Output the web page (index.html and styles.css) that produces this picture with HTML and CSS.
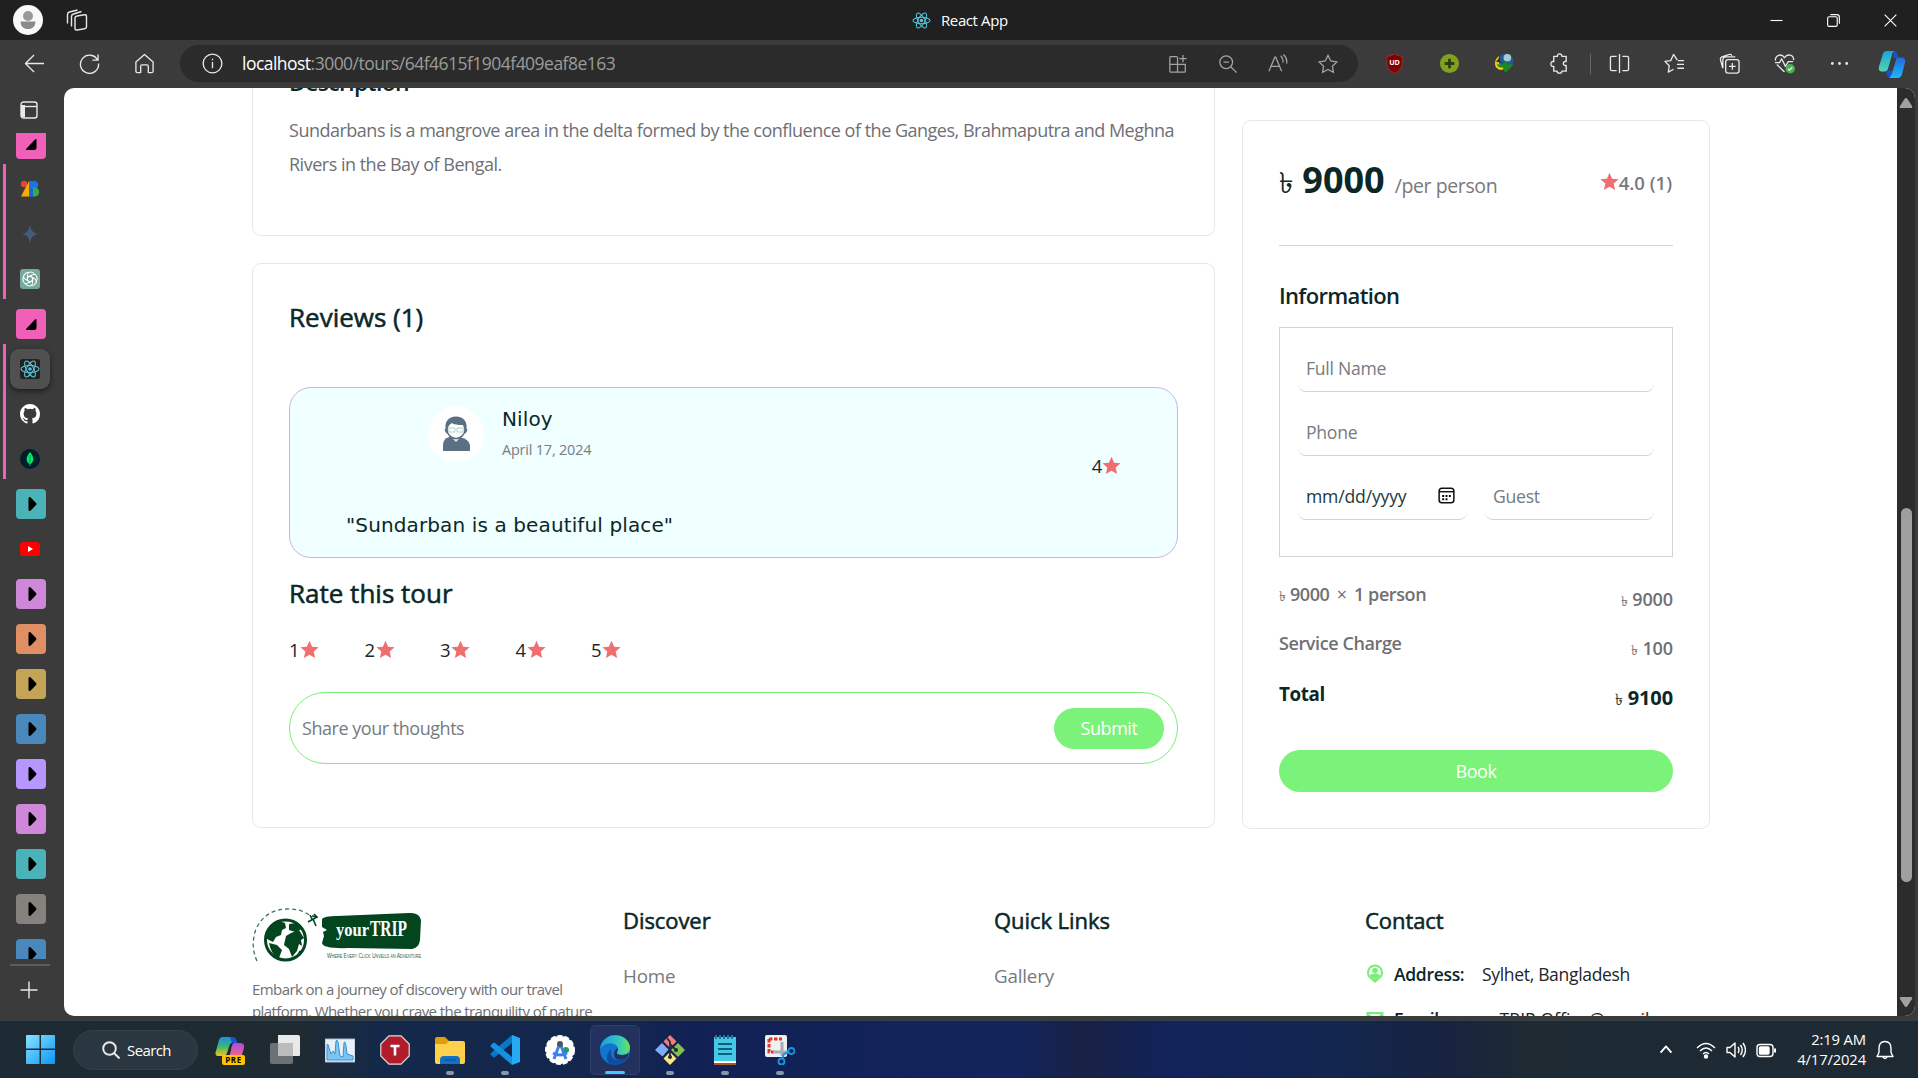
FILE: index.html
```html
<!DOCTYPE html>
<html lang="en">
<head>
<meta charset="utf-8">
<title>React App</title>
<link rel="stylesheet" href="styles.css">
</head>
<body>
<svg class="defs" width="0" height="0">
  <symbol id="star" viewBox="0 0 24 24"><path d="M12 .8l3.300 7.600 8.200.8-6.200 5.400 1.800 8.200L12 18.500 4.900 22.800l1.800-8.200L.5 9.200l8.200-.8z" fill="#ef6f71"/></symbol>
  <symbol id="react" viewBox="0 0 24 24"><g fill="none" stroke="#58c4dc" stroke-width="1.300"><ellipse cx="12" cy="12" rx="10.800" ry="4.200"/><ellipse cx="12" cy="12" rx="10.800" ry="4.200" transform="rotate(60 12 12)"/><ellipse cx="12" cy="12" rx="10.800" ry="4.200" transform="rotate(120 12 12)"/></g><circle cx="12" cy="12" r="2.200" fill="#58c4dc"/></symbol>
  <symbol id="arrow" viewBox="0 0 30 30"><path d="M12.500 9.500q0-1.500 1-1.500t1.500.7l5 5.300q1 1 0 2l-5 5.300q-.5.700-1.500.7t-1-1.500z"/></symbol>
  <symbol id="corner" viewBox="0 0 30 30"><path d="M20.500 11v7.500q0 2.500-2.500 2.500h-7q-2 0-.5-1.500l8-8.500q2-2 2 0z"/></symbol>
</svg>

<header class="titlebar">
  <svg class="profile" viewBox="0 0 30 30"><circle cx="15" cy="15" r="15" fill="#f9f9f9"/><circle cx="15" cy="11" r="5" fill="#999"/><path d="M8 16.500h14q.5 0 .3 1.500c-.6 4-3.500 6-7.300 6s-6.700-2-7.300-6q-.2-1.500.3-1.500z" fill="#8b8b8b"/></svg>
  <svg class="spaces line" viewBox="0 0 22 22"><rect x="9" y="6" width="11.500" height="14" rx="2" transform="skewY(-10) translate(0 3)"/><path d="M5.500 17.500V7.500q0-2 2-2.500l8-2.500M1.500 14.500V5.500q0-2 2-2.500l8-2"/></svg>
  <div class="window-title"><svg viewBox="0 0 24 24"><use href="#react"/></svg><span>React App</span></div>
  <div class="window-buttons">
    <svg viewBox="0 0 14 14"><path d="M.5 7h13"/></svg>
    <svg viewBox="0 0 14 14"><rect x=".7" y="3" width="10.300" height="10.300" rx="1.500"/><path d="M3.500 .7h7q2.800 0 2.800 2.800v7"/></svg>
    <svg viewBox="0 0 14 14"><path d="M.7.7l12.600 12.600M13.300.7L.7 13.300"/></svg>
  </div>
</header>

<nav class="toolbar">
  <div class="nav-buttons line">
    <svg viewBox="0 0 22 22"><path d="M21 11H1.500M10.500 2L1.500 11l9 9"/></svg>
    <svg viewBox="0 0 22 22"><path d="M19.500 7.500A9.500 9.500 0 1 0 20.500 11M20 1.500v6h-6"/></svg>
    <svg viewBox="0 0 22 22"><path d="M2 9.500L11 1.500l9 8v9.500q0 1.500-1.500 1.500h-3.500V14q0-1.500-1.500-1.500h-5Q7 12.500 7 14v6.500H3.500Q2 20.500 2 19z"/></svg>
  </div>
  <div class="address">
    <svg class="line info" viewBox="0 0 22 22"><circle cx="11" cy="11" r="9.800"/><path d="M11 9.500v6.500M11 6v1.500"/></svg>
    <span class="url"><b>localhost</b>:3000/tours/64f4615f1904f409eaf8e163</span>
    <div class="address-tools">
      <svg viewBox="0 0 22 22"><path d="M10 3H3q-1 0-1 1v15q0 1 1 1h15q1 0 1-1v-7.500H2M10.500 3v17M16.500 1v8M12.500 5h8"/></svg>
      <svg viewBox="0 0 22 22"><circle cx="9" cy="9" r="7"/><path d="M14 14l6.500 6.500M6 9h6"/></svg>
      <svg viewBox="0 0 22 22"><path d="M1 19L7.500 3.500h1L15 19M3.500 13.500h9M14 2q3 3 2.500 7.500M17 .5q4.500 4 3.500 10"/></svg>
      <svg viewBox="0 0 22 22"><path d="M11 1.500l3 6.200 6.800 1-5 4.700 1.200 6.800-6-3.200-6 3.200 1.200-6.800-5-4.700 6.800-1z"/></svg>
    </div>
  </div>
  <div class="extensions line">
    <svg viewBox="0 0 22 22"><path d="M11 1q4 2.500 8 2.500v7c0 5-3.500 8.500-8 11C6.500 19 3 15.500 3 10.500v-7q4 0 8-2.500z" fill="#800000" stroke="#a33" stroke-width=".8"/><text x="11" y="13" text-anchor="middle" class="ub">UD</text></svg>
    <svg viewBox="0 0 22 22"><circle cx="11" cy="11" r="10" fill="#7ea31d" stroke="none"/><path d="M11 6v10M6 11h10" stroke="#343b12" stroke-width="3"/></svg>
    <svg viewBox="0 0 22 22"><g stroke="none"><circle cx="12.500" cy="8.500" r="8" fill="#245a8f"/><circle cx="14" cy="5" r="4" fill="#a9c8da"/><path d="M5 3Q-1 9 2 15q4 5 10 1l-3-2q-5 0-4-11z" fill="#ecc915"/><path d="M3 11q5 3 8-1l3-2v4h6.500L12 21 9 15q-5 1-6-4z" fill="#1a8a18"/><path d="M2 9l4-4q0 5 4 6z" fill="#1c334f"/></g></svg>
    <svg viewBox="0 0 22 22"><path d="M5 3.500h4q-.5-2.500 2-2.500t2.500 2.500H18V9q-3-.5-3 2t3 2v6h-4.500q0 2-2.500 2t-2.500-2H5v-5q-3 .5-3-2.500T5 9z"/></svg>
  </div>
  <i class="divider"></i>
  <div class="browser-tools line">
    <svg viewBox="0 0 22 22"><path d="M8 3.500H3q-1.500 0-1.500 1.500v12q0 1.500 1.500 1.500h5M14 3.500h5q1.500 0 1.500 1.500v12q0 1.500-1.500 1.500h-5M11 1v20"/></svg>
    <svg viewBox="0 0 22 22"><path d="M14 7.500L10 1.500 7 8l-6 .8 4.500 4.500L4.500 20l5.500-3M14.500 8H21M13.500 12H21M14 16h7"/></svg>
    <svg viewBox="0 0 22 22"><rect x="7" y="7" width="14" height="14" rx="2.500"/><path d="M14 10.500v7M10.500 14h7M4 16L1.500 7Q1 5 3 4l8-2.500q2-.5 2.500 1.500M4 16V7.500q0-3.500 3.500-3.500H17"/></svg>
    <svg viewBox="0 0 22 22"><path d="M11 20L3 12M1.500 8C1 2 8 0 11 5c3-5 10-3 9.500 2.500M1 10h5l2-4 4 8 3-5h5"/><circle cx="17" cy="16.500" r="5" fill="#4caf50" stroke="none"/><path d="M14.800 16.500l1.500 1.500 3-3"/></svg>
    <svg viewBox="0 0 22 22"><path d="M3.500 11h.01M11 11h.01M18.500 11h.01" stroke-width="3" stroke-linecap="round"/></svg>
    <svg class="copilot" viewBox="0 0 30 30"><defs><linearGradient id="ca" x2="0" y2="1"><stop stop-color="#1aa5dc"/><stop offset="1" stop-color="#55d2b0"/></linearGradient><linearGradient id="cb" x2="0" y2="1"><stop stop-color="#2168dd"/><stop offset="1" stop-color="#22b8f8"/></linearGradient></defs><g stroke="none"><path d="M17 1q3 0 4 4l1 3h-3q-2 0-3 2zM13 22H8l1 4q1 3 4 4 2 0 2-8z" fill="#1552d4"/><path d="M9 1h9q-2 0-3 4l-4 14q-1 4-4 4H4q-4 0-3-5L5 5q1-4 4-4z" fill="url(#ca)"/><path d="M20 8h6q4 1 3 5l-3 12q-1 5-5 5h-9q2-1 3-5z" fill="url(#cb)"/></g></svg>
  </div>
</nav>

<div class="workspace">
  <aside class="tabs">
    <svg class="pane line" viewBox="0 0 18 18"><rect x="1" y="1" width="16" height="16" rx="2.500"/><path d="M1 5.500h16"/><path d="M3 4v12" stroke-width="4"/></svg>
    <div class="tab-list">
      <div class="tab"><svg class="chip pink"><use href="#corner"/></svg></div>
      <div class="tab-group">
        <div class="tab"><svg class="fav" viewBox="0 0 20 20"><circle cx="4" cy="5" r="3.200" fill="#ea4335"/><path d="M1 17.500L9 2v15.500z" fill="#f9ab00"/><path d="M9 2h3v15.500H9z" fill="#1a73e8"/><circle cx="14" cy="6" r="4.200" fill="#1a73e8"/><circle cx="14.500" cy="13" r="4.700" fill="#34a853"/><path d="M10 9h3v8.500h-3z" fill="#1967d2"/></svg></div>
        <div class="tab"><svg class="fav" viewBox="0 0 20 20"><path d="M10 1q1 8 8 9-7 1-8 9-1-8-8-9 7-1 8-9z" fill="#445b7c"/></svg></div>
        <div class="tab"><svg class="fav" viewBox="0 0 20 20"><rect width="20" height="20" rx="3" fill="#75a99c"/><g fill="none" stroke="#fff" stroke-width="1"><path id="petal" d="M7.500 8.500V5.500Q8 2.500 11 3q3 0 4 3M7.500 8.500L10 7l4 2.300"/><use href="#petal" transform="rotate(60 10 10)"/><use href="#petal" transform="rotate(120 10 10)"/><use href="#petal" transform="rotate(180 10 10)"/><use href="#petal" transform="rotate(240 10 10)"/><use href="#petal" transform="rotate(300 10 10)"/></g></svg></div>
      </div>
      <div class="tab"><svg class="chip pink"><use href="#corner"/></svg></div>
      <div class="tab-group">
        <div class="tab"><span class="active"><svg class="fav dark" viewBox="0 0 24 24"><use href="#react"/></svg></span></div>
        <div class="tab"><svg class="fav" viewBox="0 0 16 16"><path fill="#fff" d="M8 0C3.580 0 0 3.580 0 8c0 3.540 2.290 6.530 5.470 7.590.4.070.55-.17.55-.38 0-.19-.01-.82-.01-1.490-2.010.37-2.530-.49-2.690-.94-.09-.23-.48-.94-.82-1.130-.28-.15-.68-.52-.01-.53.63-.01 1.080.58 1.230.82.72 1.210 1.870.87 2.330.66.07-.52.28-.87.51-1.070-1.780-.2-3.640-.89-3.640-3.950 0-.87.31-1.590.82-2.150-.08-.2-.36-1.020.08-2.120 0 0 .67-.21 2.200.82a7.600 7.600 0 0 1 4 0c1.530-1.040 2.200-.82 2.200-.82.44 1.100.16 1.920.08 2.120.51.56.82 1.270.82 2.150 0 3.070-1.870 3.750-3.650 3.950.29.25.54.73.54 1.480 0 1.070-.01 1.930-.01 2.200 0 .21.15.46.55.38A8 8 0 0 0 16 8c0-4.420-3.580-8-8-8z"/></svg></div>
        <div class="tab"><svg class="fav" viewBox="0 0 20 20"><circle cx="10" cy="10" r="10" fill="#001e2b"/><path d="M10 3c5 6 4 10 0 12.500C6 13 5 9 10 3z" fill="#00ed64"/><path d="M10 6v11" stroke="#00a84a"/></svg></div>
      </div>
      <div class="tab"><svg class="chip teal"><use href="#arrow"/></svg></div>
      <div class="tab"><svg class="fav" viewBox="0 0 20 20"><rect y="3" width="20" height="14" rx="3.500" fill="#f00"/><path d="M8 7l5 3-5 3z" fill="#fff"/></svg></div>
      <div class="tab"><svg class="chip purple"><use href="#arrow"/></svg></div>
      <div class="tab"><svg class="chip orange"><use href="#arrow"/></svg></div>
      <div class="tab"><svg class="chip gold"><use href="#arrow"/></svg></div>
      <div class="tab"><svg class="chip blue"><use href="#arrow"/></svg></div>
      <div class="tab"><svg class="chip violet"><use href="#arrow"/></svg></div>
      <div class="tab"><svg class="chip purple"><use href="#arrow"/></svg></div>
      <div class="tab"><svg class="chip teal"><use href="#arrow"/></svg></div>
      <div class="tab"><svg class="chip gray"><use href="#arrow"/></svg></div>
      <div class="tab"><svg class="chip blue"><use href="#arrow"/></svg></div>
    </div>
    <i class="rule"></i>
    <svg class="new-tab line" viewBox="0 0 18 18"><path d="M9 .5v17M.5 9h17"/></svg>
  </aside>

  <div class="viewport">
    <main class="page">
      <div class="columns">
        <div class="main-column">
          <section class="card description">
            <h2>Description</h2>
            <p>Sundarbans is a mangrove area in the delta formed by the confluence of the Ganges, Brahmaputra and Meghna<br>Rivers in the Bay of Bengal.</p>
          </section>
          <section class="card reviews">
            <h3>Reviews (1)</h3>
            <article class="review">
              <div class="review-head">
                <svg class="avatar" viewBox="0 0 56 56"><circle cx="28" cy="28" r="28" fill="#fff"/><path d="M15 45V39q0-6 6-8l5-1 5 1q10 2 11 8v6z" fill="#5b7083"/><path d="M23 31l5 5 5-5v-4H23z" fill="#d4f0ec"/><path d="M19 22q-3 0-2 3t3 3M37 22q3 0 2 3t-3 3" fill="#5b7083"/><circle cx="28" cy="23.500" r="9" fill="#fff" stroke="#5b7083" stroke-width="1.500"/><path d="M17.500 23q-1-12 10.500-12.500Q39.500 11 38.500 23q-2-2-2.500-4-10 0-12-2-4 2-6.500 6z" fill="#5b7083"/><path d="M21 22h6v4h-6zM29 22h6v4h-6z" fill="none" stroke="#a9d8d0"/></svg>
                <div class="who"><h5>Niloy</h5><p>April 17, 2024</p></div>
                <span class="score">4<svg><use href="#star"/></svg></span>
              </div>
              <h6>"Sundarban is a beautiful place"</h6>
            </article>
            <h3 class="rate">Rate this tour</h3>
            <div class="stars"><span>1<svg><use href="#star"/></svg></span><span>2<svg><use href="#star"/></svg></span><span>3<svg><use href="#star"/></svg></span><span>4<svg><use href="#star"/></svg></span><span>5<svg><use href="#star"/></svg></span></div>
            <div class="thoughts"><span>Share your thoughts</span><button>Submit</button></div>
          </section>
        </div>
        <aside class="card booking">
          <div class="price"><span class="amount"><i class="taka">৳</i> 9000</span><span class="per">/per person</span><span class="rating"><svg><use href="#star"/></svg>4.0 (1)</span></div>
          <h4>Information</h4>
          <form class="form">
            <div class="field">Full Name</div>
            <div class="field">Phone</div>
            <div class="pair">
              <div class="field date">mm/dd/yyyy<svg viewBox="0 0 18 18"><rect x="1.200" y="1.200" width="15.600" height="15.600" rx="3" fill="none" stroke="#111" stroke-width="1.600"/><path d="M1 5h16" stroke="#111" stroke-width="1.500"/><path d="M4.500 8.500h2v2h-2zM8 8.500h2v2H8zM11.500 8.500h2v2h-2zM4.500 12h2v2h-2zM8 12h2v2H8z"/></svg></div>
              <div class="field">Guest</div>
            </div>
          </form>
          <dl class="totals">
            <div><dt><i class="taka">৳</i> 9000 <span class="times">×</span> 1 person</dt><dd><i class="taka">৳</i> 9000</dd></div>
            <div><dt>Service Charge</dt><dd><i class="taka">৳</i> 100</dd></div>
            <div class="sum"><dt>Total</dt><dd><i class="taka">৳</i> 9100</dd></div>
          </dl>
          <button class="book">Book</button>
        </aside>
      </div>
      <footer class="footer">
        <div>
          <svg class="logo" viewBox="0 0 170 54"><path d="M5 53Q-2 38 4 21 13 2 34 1q15-1 26 8" fill="none" stroke="#3d7359" stroke-dasharray="4 3" stroke-width="1.300"/><circle cx="33.500" cy="32" r="20" fill="#fff" stroke="#03451f" stroke-width="3"/><path d="M15 24q4-9 12-11l6 2 1 5-4 2-1 5-5 2-3 5-6-3zM17 35l8 2 5 5-3 8q-8-3-10-15zM34 28l5-3 8-3 5 8-3 2 1 6-3-2-2 7-5 6-3-8-5-4zM37 16l7-1 6 6-7 3-6-2zM47 43l4-1q-3 6-7 8z" fill="#03451f"/><path d="M56 14l9-5-3-3M60 11l-2-4M61 11l3 7M65 9l-5-1" fill="none" stroke="#03451f" stroke-width="1.600"/><path d="M70 11q2-3 15-3l72-3q10-1 12 7l-1 20q-1 8-8 9l-63-1q-26 1-27-5l2-7-1-4 4-2-5-3z" fill="#03451f"/><text x="84" y="28" class="brand-your" textLength="33" lengthAdjust="spacingAndGlyphs">your</text><text x="118" y="28" class="brand-trip" textLength="37" lengthAdjust="spacingAndGlyphs">TRIP</text><text x="75" y="50" class="tagline" textLength="94" lengthAdjust="spacingAndGlyphs">Where Every Click Unveils an Adventure</text></svg>
          <p class="blurb">Embark on a journey of discovery with our travel<br>platform. Whether you crave the tranquility of nature</p>
        </div>
        <div><h5>Discover</h5><a>Home</a></div>
        <div><h5>Quick Links</h5><a>Gallery</a></div>
        <div>
          <h5>Contact</h5>
          <div class="contact"><svg viewBox="0 0 18 20"><path d="M9 .5a8 8 0 0 1 8 8q0 4-3.500 6.500L9 19l-4.500-4Q1 12.500 1 8.500a8 8 0 0 1 8-8z" fill="#79ee77"/><circle cx="9" cy="8.500" r="6" fill="#fff"/><circle cx="9" cy="6.500" r="2.700" fill="#79ee77"/><path d="M4 12q0-2.500 5-2.500t5 2.500q-5 5-10 0z" fill="#79ee77"/></svg><b>Address:</b><span>Sylhet, Bangladesh</span></div>
          <div class="contact mail"><svg viewBox="0 0 18 20"><path d="M1.500 4h15v13h-15zM1.500 5L9 11l7.500-6" fill="none" stroke="#79ee77" stroke-width="2"/></svg><b>Email:</b><span>yourTRIP.Office@gmail.com</span></div>
        </div>
      </footer>
    </main>
    <div class="scrollbar"><svg viewBox="0 0 14 12"><path d="M7 1q1 0 1.500 1L13 9q1 2-1 2H2Q0 11 1 9l4.500-7Q6 1 7 1z"/></svg><i></i><svg class="down" viewBox="0 0 14 12"><path d="M7 1q1 0 1.500 1L13 9q1 2-1 2H2Q0 11 1 9l4.500-7Q6 1 7 1z"/></svg></div>
  </div>
</div>

<div class="taskbar">
  <svg class="start" viewBox="0 0 30 30"><defs><linearGradient id="w" x2="1" y2="1"><stop stop-color="#8be2ff"/><stop offset="1" stop-color="#0a97f5"/></linearGradient></defs><path d="M0 1q0-1 1-1h13v14H0zM15.500 0H29q1 0 1 1v13H15.500zM0 15.500h14V30H1q-1 0-1-1zM15.500 15.500H30V29q0 1-1 1H15.500z" fill="url(#w)"/></svg>
  <div class="search"><svg class="line" viewBox="0 0 18 18"><circle cx="7.500" cy="7.500" r="6.300"/><path d="M12 12l5.500 5.500"/></svg>Search</div>
  <div class="apps">
    <div><svg viewBox="0 0 30 30"><defs><linearGradient id="k1" x2="0" y2="1"><stop stop-color="#1b8eea"/><stop offset=".5" stop-color="#3db66f"/><stop offset="1" stop-color="#f0c51c"/></linearGradient><linearGradient id="k2" x2="0" y2="1"><stop stop-color="#a94be0"/><stop offset="1" stop-color="#ff6a75"/></linearGradient></defs><path d="M7 2h10q4 0 5 6h-5q-2 0-3 4l-2 6q-1 3-4 3H4q-5 0-3-5L4 5q1-3 3-3z" fill="url(#k1)"/><path d="M15 2h3q3 0 4 6h-5z" fill="#1f4fd0"/><path d="M19 8h6q5 0 4 5l-3 10H13q2-2 3-8 1-7 3-7z" fill="url(#k2)"/><rect x="7" y="20" width="23" height="10" rx="2" fill="#ffc400"/><text x="18.500" y="28" text-anchor="middle" class="pre">PRE</text></svg></div>
    <div><svg viewBox="0 0 30 30"><path d="M8 0h20q2 0 2 2v18q0 1-1 1H8z" fill="#e9e9e9"/><path d="M0 10q0-2 2-2h21v19q0 2-2 2H2q-2 0-2-2z" fill="#6d7173"/><path d="M8 8h15v13H8z" fill="#bcbcbc"/></svg></div>
    <div><svg viewBox="0 0 30 30"><rect y="4" width="30" height="23" fill="#e8f1fa" stroke="#a9b8c6"/><path d="M2 25V10q1-3 2 3l2 6 2-3 2 3 1-13q1-2 2 1l2 14 3 1 1-14q1-3 2 3l1 8 6 2v4z" fill="#7cc5f3" stroke="#3a8fd0"/></svg></div>
    <div><svg viewBox="0 0 30 30"><path d="M9 .8h12L29.200 9v12L21 29.200H9L.8 21V9z" fill="#b01c2c" stroke="#ddd" stroke-width="1.200"/><path d="M10.500 11h9M15 10v10.500" stroke="#fff" stroke-width="2.600"/></svg></div>
    <div class="open"><svg viewBox="0 0 30 30"><path d="M0 4q0-2 2-2h8l4 4h14v8H0z" fill="#e19e0c"/><path d="M0 9h11l3-3h14q2 0 2 2v19q0 2-2 2H2q-2 0-2-2z" fill="#ffd04c"/><path d="M5 29v-4q0-4 4-4h12q4 0 4 4v4z" fill="#1371c8"/><path d="M9 25h12" stroke="#0d4c94"/></svg></div>
    <div class="open"><svg viewBox="0 0 30 30"><path d="M22 0v8L5 22q-1 1-2 0l-2-2q-1-1 0-2z" fill="#0a78c8"/><path d="M22 30v-8L5 8Q4 7 3 8l-2 2q-1 1 0 2z" fill="#1690e0"/><path d="M22 0l8 3v24l-8 3z" fill="#28a9f4"/></svg></div>
    <div><svg viewBox="0 0 30 30"><circle cx="15" cy="15" r="14" fill="#fff" stroke="#fff" stroke-width="2" stroke-dasharray="5 2"/><circle cx="21" cy="15" r="3" fill="#2a9a50"/><path d="M15 8L9 24M15 8l6 16M8 18q7 4 14 0" fill="none" stroke="#3e7ff0" stroke-width="3"/><circle cx="15" cy="9" r="3" fill="#4b5563"/></svg></div>
    <div class="current open"><svg viewBox="0 0 30 30"><defs><linearGradient id="e1"><stop stop-color="#1c9de0"/><stop offset=".6" stop-color="#32c4c5"/><stop offset="1" stop-color="#6be25b"/></linearGradient></defs><circle cx="15" cy="15" r="15" fill="#1274cf"/><path d="M0 14C2-4 28-4 30 12q0 8-8 8-6 0-5-3 3-5-3-8Q6 6 0 14z" fill="url(#e1)"/><path d="M11 14q-2 12 10 11l6-1q-6 7-15 6Q2 25 11 14z" fill="#0c4fa0"/><path d="M17 17q-1 3 5 3 4 0 7-2-1 4-3 6-12 3-12-5 0-3 3-6 2 1 0 4z" fill="#22315d"/></svg></div>
    <div class="open"><svg viewBox="0 0 30 30"><path d="M15 0l6.500 6.500-6.500 6.500-6.500-6.500z" fill="#f57c7c"/><path d="M7 8l6.500 6.500-6 7L0 15z" fill="#7dadf7"/><path d="M23 8l7 7-7 7-7-7z" fill="#81c150"/><path d="M15 17l6.500 6.500L15 30l-6.500-6.500z" fill="#ffe477"/><path d="M12 3l3 4v15M15 9l5 5" stroke="#222b40" stroke-width="1.800" fill="none"/><circle cx="15" cy="22" r="2" fill="#222b40"/><circle cx="21" cy="15" r="2" fill="#222b40"/></svg></div>
    <div class="open"><svg viewBox="0 0 30 30"><path d="M4 2h22v25H4z" fill="#45c7e6"/><path d="M4 27h22v3H4z" fill="#a5592a"/><path d="M4 26h22v2H4z" fill="#fff"/><path d="M8 9h14M8 14h14M8 19h14" stroke="#09617f" stroke-width="2"/><path d="M6 0v4M10 0v4M14 0v4M18 0v4M22 0v4" stroke="#17799b" stroke-width="2"/></svg></div>
    <div class="open"><svg viewBox="0 0 30 30"><rect width="22" height="22" rx="2" fill="#f0f0f0"/><path d="M4 4h13M4 4v13h5" stroke="#da3b26" stroke-width="3" stroke-dasharray="3.500 1.500" fill="none"/><path d="M17 7v14M8 17h15" stroke="#a7adb3" stroke-width="3"/><circle cx="26.500" cy="16" r="3" fill="none" stroke="#1a93e0" stroke-width="1.800"/><circle cx="16.500" cy="26.500" r="3" fill="none" stroke="#1a93e0" stroke-width="1.800"/><path d="M17 24l2-5 5-2" stroke="#1a93e0" stroke-width="2" fill="none"/></svg></div>
  </div>
  <div class="tray line">
    <svg class="up" viewBox="0 0 14 10"><path d="M1 8.500l6-7 6 7"/></svg>
    <svg viewBox="0 0 20 18"><path d="M1 7q9-9 18 0M4 10q6-6 12 0M7 13q3-3 6 0"/><circle cx="10" cy="15.500" r="1.500" fill="#fff"/></svg>
    <svg viewBox="0 0 20 18"><path d="M1 6.500h3L9 2v14l-5-4.500H1zM12 6q2 3 0 6M14.500 4q3.500 5 0 10M17 2q5 7 0 14"/></svg>
    <svg viewBox="0 0 20 18"><rect x="1" y="3.500" width="16" height="12" rx="3"/><rect x="3.500" y="6" width="9.500" height="7" rx="1" fill="#fff"/><path d="M19 7.500v4" stroke-width="2"/></svg>
    <div class="clock">2:19 AM<br>4/17/2024</div>
    <svg class="bell" viewBox="0 0 18 20"><path d="M9 1.500q6 0 6 7v4l2 4H1l2-4v-4q0-7 6-7zM6.500 16.500q2.500 4 5 0"/></svg>
  </div>
</div>
</body>
</html>
```
FILE: styles.css
```css
* { box-sizing: border-box; }
body {
  margin: 0;
  width: 1918px;
  height: 1078px;
  overflow: hidden;
  background: #3b3b3b;
  color: #0b2727;
  font-family: "Open Sans", "Noto Sans", sans-serif;
  letter-spacing: -0.025em;
}
h2, h3, h4, h5, h6, p, dl, dd { margin: 0; }
svg { display: block; flex: none; }
i { font-style: normal; }
.defs { position: absolute; }
.line { fill: none; stroke: #e8e8e8; stroke-width: 1.4; stroke-linejoin: round; }

/* Browser chrome */
.titlebar { display: flex; align-items: center; height: 40px; padding-left: 13px; background: #202020; color: #fff; }
.profile { width: 30px; height: 30px; }
.spaces { width: 22px; height: 22px; margin-left: 23px; }
.window-title { display: flex; align-items: center; gap: 10px; margin: 0 auto 0 824px; font-size: 15px; }
.window-title svg { width: 19px; height: 19px; }
.window-buttons { display: flex; gap: 44px; padding-right: 21px; fill: none; stroke: #fff; stroke-width: 1.2; }
.window-buttons svg { width: 13px; height: 13px; }

.toolbar { display: flex; align-items: center; height: 48px; padding-bottom: 1px; }
.nav-buttons, .extensions, .browser-tools { display: flex; }
.nav-buttons svg { width: 21px; height: 21px; margin-right: 34px; }
.nav-buttons { padding-left: 24px; width: 180px; }
.address { display: flex; align-items: center; width: 1178px; height: 37px; border-radius: 19px; background: #2b2b2b; }
.info { width: 21px; height: 21px; margin-left: 22px; }
.url { margin-left: 19px; padding-bottom: 1px; font-size: 17.500px; letter-spacing: -0.030em; color: #9b9b9b; }
.url b { color: #fff; font-weight: 400; }
.address-tools { display: flex; gap: 30px; margin-left: auto; padding-right: 20px; fill: none; stroke: #a3a3a3; stroke-width: 1.4; }
.address-tools svg { width: 20px; height: 20px; }
.extensions { gap: 34px; margin-left: 26px; }
.extensions svg { width: 21px; height: 21px; }
.ub { font: 700 7.500px "Open Sans", sans-serif; fill: #fff; stroke: none; letter-spacing: 0; }
.divider { width: 1px; height: 20px; margin: 0 18px 0 20px; background: #666; }
.browser-tools { align-items: center; gap: 34px; }
.browser-tools svg { width: 21px; height: 21px; }
.browser-tools .copilot { width: 30px; height: 28px; margin-left: -7px; }

/* Vertical tabs */
.workspace { display: flex; height: 932px; }
.tabs { width: 64px; }
.pane { width: 18px; height: 18px; margin: 13px 0 14px 20px; }
.tab-list { height: 826px; overflow: hidden; }
.tab-list > :first-child { margin-top: -12px; }
.tab { display: flex; align-items: center; height: 45px; padding-left: 16px; }
.tab-group { position: relative; }
.tab-group::before { content: ""; position: absolute; left: 3px; top: -2px; width: 3px; height: 135px; background: #f05fb8; }
.chip { width: 30px; height: 30px; border-radius: 4px; }
.pink { background: #f05fb8; }
.teal { background: #4bb3b7; }
.purple { background: #cf87da; }
.orange { background: #e08f65; }
.gold { background: #c4a557; }
.blue { background: #4a88bb; }
.violet { background: #b697ff; }
.gray { background: #85817d; }
.fav { width: 20px; height: 20px; margin-left: 4px; }
.dark { margin: 0; background: #222; border-radius: 2px; }
.active { display: flex; align-items: center; justify-content: center; width: 40px; height: 40px; margin-left: -6px; border-radius: 9px; background: #505050; box-shadow: 0 2px 5px #1c1c1c; }
.rule { display: block; width: 40px; height: 2px; margin: 5px 0 0 10px; background: #5c5c5c; }
.new-tab { width: 18px; height: 18px; margin: 15px 0 0 20px; }

/* Page */
.viewport { display: flex; width: 1851px; height: 928px; border-radius: 10px; overflow: hidden; background: #fff; }
.page { width: 1833px; height: 928px; padding-left: 188px; overflow: hidden; }
.columns { display: flex; gap: 27px; height: 741px; }
.main-column { width: 963px; }
.card { border: 1px solid #e7e7e8; border-radius: 9px; padding: 0 36px; }
.description { height: 158px; margin-top: -10px; }
h2 { margin-top: -13px; font-size: 23px; line-height: 32px; font-weight: 600; letter-spacing: -0.03em; }
.description p { margin-top: 15px; font-size: 18px; line-height: 34px; letter-spacing: -0.0275em; color: #6e7074; white-space: nowrap; }
.reviews { height: 565px; margin-top: 27px; }
h3, .footer h5 { font-weight: 400; letter-spacing: 0; -webkit-text-stroke: .55px #0b2727; }
h3 { padding-top: 33px; font-size: 26px; line-height: 40px; }
.review { height: 171px; margin-top: 50px; border: 1px solid #cdb0f2; border-radius: 22px; background: #f0ffff; padding: 18px 56px 0 56px; }
.review-head { display: flex; padding-left: 82px; height: 94px; }
.avatar { width: 56px; height: 56px; }
.who { margin-left: 18px; }
.who h5, h6 { font: 400 20px/24px "DejaVu Sans", sans-serif; letter-spacing: .12px; }
.who h5 { margin-top: 1px; }
.who p { margin-top: 7px; font-size: 14.500px; line-height: 24px; letter-spacing: -0.015em; color: #7b7d80; }
.score, .stars span { display: flex; align-items: center; font-size: 18.500px; line-height: 26px; color: #212529; }
.score { margin: 47px 0 auto auto; }
.score svg, .stars svg { width: 19px; height: 19px; margin-top: -2px; }
.stars svg { margin-left: 1px; }
h6 { margin-top: 13px; }
.reviews .rate { padding: 0; margin-top: 15px; }
.stars { display: flex; margin-top: 24px; }
.stars span { width: 75.500px; }
.thoughts { display: flex; align-items: center; justify-content: space-between; height: 72px; margin-top: 29px; padding: 0 13px 0 12px; border: 1px solid #79f078; border-radius: 36px; font-size: 18px; letter-spacing: -0.026em; color: #747b82; }
button { border: 0; border-radius: 21px; background: #7bf279; color: #fff; font: 400 18px "Open Sans", sans-serif; letter-spacing: -0.025em; }
.thoughts button { width: 110px; height: 41px; }

.booking { width: 468px; height: 709px; margin-top: 32px; }
.price { display: flex; align-items: baseline; height: 125px; padding-top: 34px; border-bottom: 1px solid #d3d4d6; color: #77797d; }
.amount { font-size: 36px; font-weight: 700; line-height: 50px; letter-spacing: 0; color: #0b2727; }
.taka { font-weight: 400; font-size: .8em; }
.per { margin-left: 10px; font-size: 19.500px; }
.rating { display: flex; align-items: center; margin: 0 1px 0 auto; padding-bottom: 3px; align-self: center; font-size: 18.500px; font-weight: 600; letter-spacing: 0; }
.price .rating { align-self: flex-start; margin-top: 15px; }
.rating svg { width: 19px; height: 19px; margin-top: -3px; }
h4 { margin-top: 32px; font-size: 22px; line-height: 34px; font-weight: 600; letter-spacing: -0.03em; }
.form { height: 230px; margin-top: 15px; padding: 16px 18px 0; border: 1px solid #d3d4d6; }
.field { height: 48px; margin-bottom: 16px; padding: 0 8px; border-bottom: 1px solid #d3d4d6; border-radius: 8px; font-size: 17.600px; line-height: 48px; letter-spacing: -0.015em; color: #747b82; }
.pair { display: grid; grid-template-columns: 1fr 1fr; gap: 18px; }
.date { display: flex; align-items: center; justify-content: space-between; letter-spacing: -0.01em; color: #1d3a3a; }
.date svg { width: 17px; height: 17px; margin-right: 4px; }
.totals { margin-top: 21px; font-size: 18px; font-weight: 600; color: #6e7074; }
.totals > div { display: flex; justify-content: space-between; height: 49px; line-height: 32px; }
.totals dd { padding-top: 5px; letter-spacing: -0.005em; }
.times { font-weight: 400; margin: 0 3px; }
.totals .sum { font-size: 18.800px; font-weight: 700; color: #0b2727; line-height: 36px; }
.totals .sum dd { padding-top: 4px; font-size: 20px; }
.book { width: 100%; height: 42px; margin-top: 25px; }

/* Page footer */
.footer { display: grid; grid-template-columns: repeat(4, 371px); margin-top: 79px; color: #212529; }
.logo { width: 170px; height: 54px; }
.brand-your { font: 700 19px "Liberation Serif", serif; fill: #fff; letter-spacing: 0; }
.brand-trip { font: 700 24px "Liberation Serif", serif; fill: #fff; letter-spacing: 0; }
.tagline { font: small-caps 400 6.500px "Liberation Sans", sans-serif; fill: #2d5f44; letter-spacing: 0; }
.blurb { margin-top: 16px; font-size: 15px; line-height: 22px; letter-spacing: -0.039em; color: #6e7074; white-space: nowrap; }
.footer h5 { font-size: 22px; line-height: 30px; color: #0b2727; margin-top: -3px; letter-spacing: -0.003em; }
.footer a { display: block; margin-top: 27px; font-size: 18.800px; line-height: 28px; letter-spacing: -0.01em; color: #77797d; }
.contact { display: flex; align-items: center; height: 42px; margin-top: 18px; font-size: 17.500px; letter-spacing: -0.018em; white-space: nowrap; }
.contact svg { width: 18px; height: 20px; margin: 0 10px 0 1px; }
.contact b { width: 88px; font-weight: 600; color: #0b2727; }
.mail { margin-top: 3px; }
.mail b { width: 68px; }
.mail span { letter-spacing: .005em; }

.scrollbar { display: flex; flex-direction: column; align-items: center; width: 18px; padding: 9px 0 8px; background: #2c2c2c; fill: #a0a0a0; }
.scrollbar svg { width: 14px; height: 12px; }
.scrollbar i { width: 11px; height: 374px; margin: 399px 0 auto; border-radius: 6px; background: #9f9f9f; }
.down { transform: rotate(180deg); }

/* Taskbar */
.taskbar { display: flex; align-items: center; height: 58px; padding-left: 26px; color: #fff; border-top: 1px solid #34414b;
  background: linear-gradient(90deg, #1e2a33 0, #1f2a32 300px, #14294a 380px, #13264e 620px, #112154 690px, #12235a 900px, #12245a 1020px, #1a2145 1080px, #11235a 1170px, #12264f 1330px, #18233f 1450px, #1f2a33 1530px, #1d2a34 100%); }
.start { width: 29px; height: 29px; }
.search { display: flex; align-items: center; gap: 7px; width: 125px; height: 40px; margin-left: 18px; padding-left: 28px; border: 1px solid #33404a; border-radius: 20px; background: #2a3640; font-size: 15px; letter-spacing: -0.04em; }
.search svg { width: 18px; height: 18px; stroke-width: 2; }
.apps { display: flex; gap: 5px; margin-left: 7px; }
.apps div { display: flex; flex-direction: column; align-items: center; width: 50px; height: 50px; padding-top: 10px; border-radius: 5px; }
.apps svg { width: 30px; height: 30px; }
.pre { font: 700 8px "Open Sans", sans-serif; letter-spacing: .5px; }
.open::after { content: ""; width: 8px; height: 4px; margin-top: 6px; border-radius: 2px; background: #8d94a8; }
.current { background: #22315d; border: 1px solid #303e67; }
.apps .current { padding-top: 9px; }
.current::after { width: 20px; background: #4cc2ff; }
.tray { display: flex; align-items: center; gap: 10px; margin-left: auto; padding-right: 24px; stroke: #fff; }
.tray svg { width: 20px; height: 18px; }
.tray .up { width: 14px; height: 9px; margin-right: 13px; stroke-width: 2; }
.clock { width: 80px; margin-bottom: 1px; font-size: 14.800px; line-height: 20px; letter-spacing: -0.01em; text-align: right; stroke: none; }
.tray .bell { width: 18px; height: 20px; }
```
